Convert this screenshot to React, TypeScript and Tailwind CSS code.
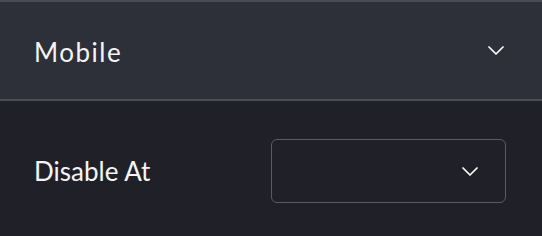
import React from "react";

const Chevron = ({ className }: { className?: string }) => (
  <svg viewBox="0 0 16 9" className={className} fill="none">
    <path d="M1 1l7 7 7-7" stroke="currentColor" strokeWidth="1.7" strokeLinecap="round" strokeLinejoin="round" />
  </svg>
);

export default function App() {
  return (
    <div className="w-[542px] h-[236px] bg-[#202128] text-white overflow-hidden" style={{ fontFamily: "Lato, 'Noto Sans', sans-serif" }}>
      <div className="h-[2px] bg-[#4a4c55]" />
      <div className="h-[99px] bg-[#2d3038] border-b-2 border-[#4b4e57] flex items-center justify-between pl-[34px] pr-[38px]">
        <span className="text-[26px] tracking-[1.5px] text-[#f4f4f6] leading-none pt-[3px]">Mobile</span>
        <Chevron className="w-[16px] h-[9px] text-white" />
      </div>
      <div className="flex items-center justify-between pl-[34px] pr-[36px] pt-[38px]">
        <span className="text-[26px] text-[#f4f4f6] leading-none">Disable At</span>
        <div className="w-[235px] h-[64px] rounded-[6px] border-[1.5px] border-[#5a5c62] flex items-center justify-end pr-[27px]">
          <Chevron className="w-[16px] h-[9px] text-white" />
        </div>
      </div>
    </div>
  );
}
